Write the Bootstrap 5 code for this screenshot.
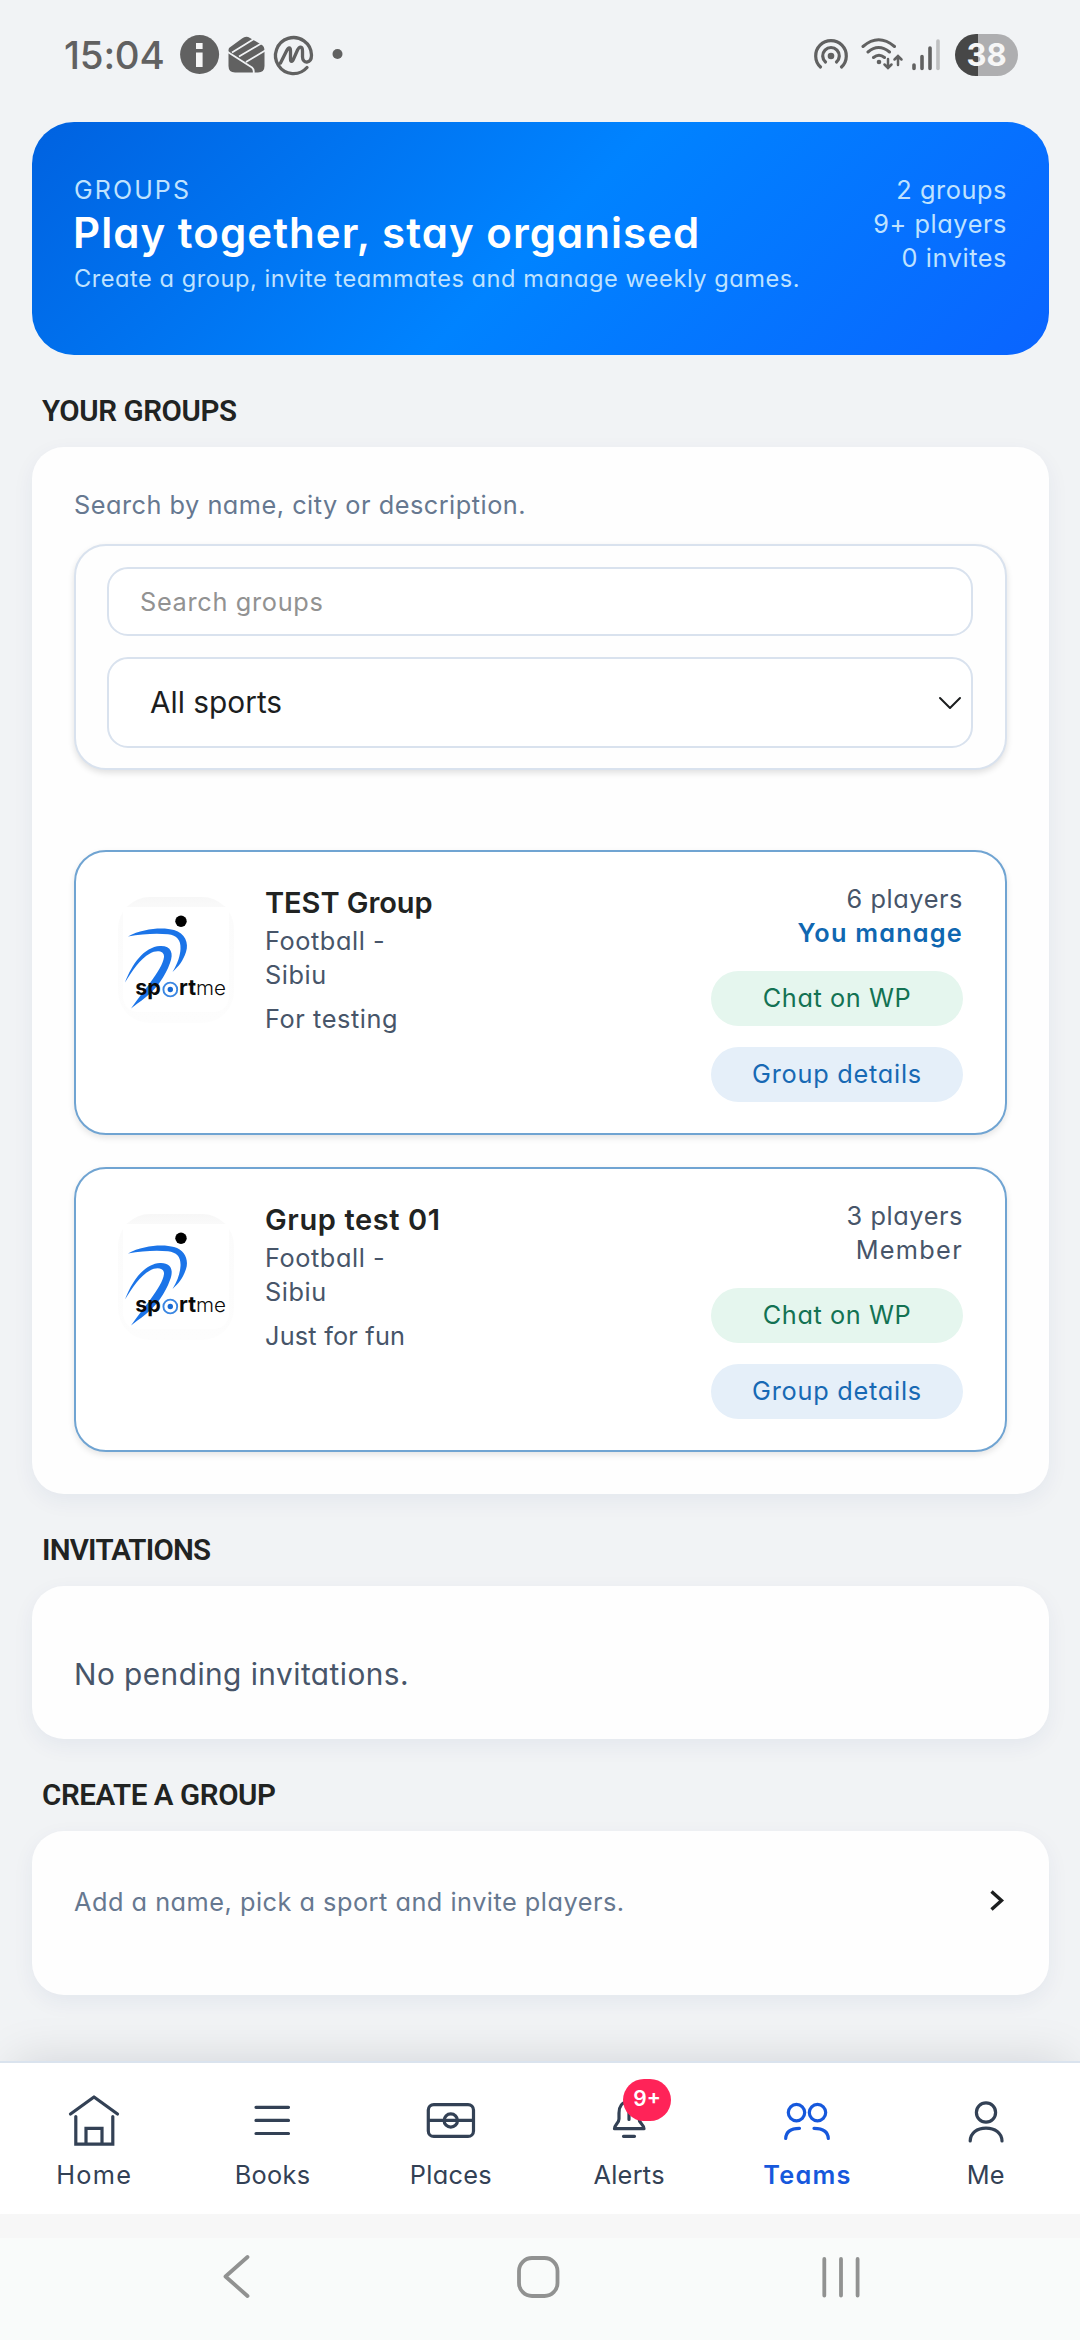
<!DOCTYPE html>
<html lang="en">
<head>
<meta charset="utf-8">
<meta name="viewport" content="width=device-width, initial-scale=1">
<title>Groups</title>
<link href="https://cdn.jsdelivr.net/npm/bootstrap@5.3.0/dist/css/bootstrap.min.css" rel="stylesheet">
<style>
  body{width:1080px;height:2340px;background:#f1f3f5;color:#212322;font-family:Inter,"Open Sans",sans-serif;font-feature-settings:"cv11";font-size:25.3px;line-height:34px;letter-spacing:.58px;overflow:hidden}
  svg{display:block;flex:none}
  .statusbar{height:122px;padding:0 62px 12px 64px;color:#616161}
  .clock{font-size:38.5px;font-weight:500;letter-spacing:-.2px;width:114px}
  .battery{width:63px;height:42px;border-radius:21px;margin-left:13px;background:linear-gradient(90deg,#474747 37%,#aeaeb0 37%);color:#f6f6f6;font-size:31px;font-weight:700;letter-spacing:0}
  .page{padding:0 31px 0 32px}
  .hero{height:233px;border-radius:42px;background:linear-gradient(135deg,#0062e0 0%,#0083ff 50%,#0a64ff 100%);padding:51px 42px 0;color:#bfe2ff}
  .eyebrow{font-size:25px;letter-spacing:2.1px}
  .hero-title{font-size:42px;line-height:46px;font-weight:600;letter-spacing:1.05px;margin:3px 0 6px -1px;color:#fff}
  .hero-sub{font-size:23.6px;letter-spacing:.54px}
  .section-title{font-family:Roboto,sans-serif;font-size:29.5px;line-height:36px;font-weight:600;letter-spacing:-.4px;padding:37.5px 0 18.5px 10px;margin:0}
  .panel{background:#fefefe;border-radius:32px;padding:41px 42px 42px;box-shadow:0 7px 22px rgba(20,50,120,.06)}
  .panel-invites{height:153px;padding-top:68px}
  .panel-create{height:164px;padding-top:54px}
  .empty-note{font-size:29.8px;line-height:40px;letter-spacing:.46px;color:#475569}
  .hint{color:#667890;letter-spacing:.5px}
  .filters{border:2px solid #d9e2ee;border-radius:32px;margin-top:22px;height:226px;padding:21px 32px 0 31px;gap:21px;box-shadow:0 3px 6px rgba(0,0,0,.12);background:#fefefe}
  .field{border:2px solid #d9e2ee;border-radius:21px;background:#fff}
  .field-search{height:69px;padding:0 31px 1px;font-size:25.3px;letter-spacing:.68px;outline:0}
  .field-search::placeholder{color:#929292}
  .field-select{height:91px;padding:0 9px 0 41px}
  .field-select select{appearance:none;border:0;background:none;font:inherit;font-size:29.8px;letter-spacing:0;color:#1c1e1f;padding:0 0 2px;line-height:40px}
  .groups{margin-top:80px;gap:32px}
  .group{height:285px;border:2px solid #70a4d2;border-radius:32px;background:#fff;padding:30px 42px 0;box-shadow:0 3px 6px rgba(0,0,0,.1);color:#475569}
  .logo{margin:15px 31px 0 0}
  .group-name{font-size:29px;line-height:36px;font-weight:600;margin:2.5px 0 3.5px;letter-spacing:-.05px;color:#212322}
  .about{margin-top:10px}
  .side{width:252px}
  .manage{color:#0f67b1;font-weight:600;letter-spacing:1.2px}
  .member{letter-spacing:1.3px}
  .pill{height:55px;border-radius:28px;margin-top:21px;padding-bottom:1px}
  .pill-chat{background:#e5f6ee;color:#137253}
  .pill-info{background:#e5eff9;color:#1769b4;letter-spacing:.75px}
  .tabs{height:153px;border-top:2px solid #dae3ee;background:#fff;padding:27px 5px 0;box-shadow:0 -14px 48px -14px rgba(15,15,20,.13);color:#334155;z-index:2;letter-spacing:.3px}
  .tabs>div{flex:1 1 0}
  .tabs svg{margin-bottom:8px}
  .tab-home{letter-spacing:1.3px}
  .tab-active{color:#1658dc;font-weight:600;letter-spacing:1.3px}
  .bell{width:60px}
  .alert-count{position:absolute;left:24px;top:-11px;width:48px;height:42px;border-radius:21px;background:#ff2358;color:#fff;font-size:21px;font-weight:600;letter-spacing:0;line-height:39px}
  .inset-strip{height:24px;background:#f7f7f7;z-index:3}
  .sysbar{height:102px;background:#f9fbfa;z-index:3}
</style>
</head>
<body class="d-flex flex-column">

<header class="statusbar d-flex align-items-center">
  <span class="clock">15:04</span>
  <svg width="165" height="44" viewBox="178 34 165 44">
    <circle cx="199.600" cy="55.500" r="19.500" fill="#616161"/>
    <path d="M196 44h6.600v6H196zM196 53.500h6.600V68H196z" fill="#f6f6f6"/>
    <path d="M229 49 242 39.500Q246 36.500 250 39L262 46Q264.500 47.500 264.500 52V67Q264.500 73.500 258 73.500H235Q228.500 73.500 228.500 67V51Z" fill="#616161"/>
    <path d="M227 52.500 252 68.500Q254.500 70.500 253.500 75M239 57.500 264.500 42.500M246 63 266 51M232 53.500 255.500 39" fill="none" stroke="#f1f3f5" stroke-width="1.800"/>
    <path d="M307 68.500A18 18 0 1 1 311.500 56C311.500 65 302.500 65 302.500 58V52C302.500 47 299.500 47 297.500 51L293.500 60C292.500 63 290.500 63 290.500 60V52C290.500 48 288.500 48 286.500 52L280.500 64" fill="none" stroke="#616161" stroke-width="3.300" stroke-linecap="round"/>
    <circle cx="338" cy="55" r="5" fill="#616161" transform="translate(-.5 0)"/>
  </svg>
  <svg class="ms-auto" width="130" height="44" viewBox="812 34 130 44" fill="none" stroke="#616161" stroke-width="3.200" stroke-linecap="round">
    <path d="M820.500 68A15.300 15.300 0 1 1 841.500 68M825.500 63A8.300 8.300 0 1 1 836.500 63"/>
    <circle cx="831" cy="57" r="3.300" fill="#616161" stroke="none"/>
    <path d="M863 47.500Q878.500 34 894.500 47.500M868 53Q878.500 44 889.500 53M873.500 58.500Q879 54 884.500 58.500" stroke-width="3"/>
    <circle cx="879" cy="63" r="2.300" fill="#616161" stroke="none"/>
    <path d="M888 60V68.500M884.500 65.500 888 69 891.500 65.500M898 66V57.500M894.500 60.500 898 57 901.500 60.500" stroke-width="2.500"/>
    <path d="M914 66V69.500M922 57.500V69.500M930 49V69.500" stroke-width="3.600"/>
    <path d="M938 42V69.500" stroke="#bfc0c1" stroke-width="3.600"/>
  </svg>
  <span class="battery d-flex align-items-center justify-content-center">38</span>
</header>

<main class="page flex-grow-1">
  <section class="hero d-flex justify-content-between">
    <div>
      <div class="eyebrow">GROUPS</div>
      <h1 class="hero-title">Play together, stay organised</h1>
      <div class="hero-sub">Create a group, invite teammates and manage weekly games.</div>
    </div>
    <div class="text-end">2 groups<br>9+ players<br>0 invites</div>
  </section>

  <h2 class="section-title">YOUR GROUPS</h2>
  <section class="panel">
    <div class="hint">Search by name, city or description.</div>
    <form class="filters d-flex flex-column">
      <input class="field field-search w-100" type="text" placeholder="Search groups">
      <div class="field field-select d-flex align-items-center">
        <select class="flex-grow-1"><option>All sports</option></select>
        <svg width="24" height="14" viewBox="0 0 24 14" fill="none" stroke="#1c1e1f" stroke-width="2" stroke-linecap="round" stroke-linejoin="round"><path d="M2 2 12 12 22 2"/></svg>
      </div>
    </form>

    <div class="groups d-flex flex-column">
      <article class="group d-flex align-items-start">
        <svg class="logo" width="116" height="126" viewBox="0 0 116 126">
          <defs>
            <linearGradient id="tile" x1="0" y1="0" x2="0" y2="1"><stop offset="0" stop-color="#f7f7f7"/><stop offset=".12" stop-color="#fbfbfb"/><stop offset="1" stop-color="#fdfdfd"/></linearGradient>
            <g id="runner">
              <rect width="116" height="126" rx="32" fill="url(#tile)"/>
              <path d="M5 10H111V98Q111 115 94 115H22Q5 115 5 98Z" fill="#fff"/>
              <circle cx="63" cy="24.300" r="5.700" fill="#000"/>
              <path d="M10 39.500C25 31 46 30 56 33C67 36 71 46 68 55C65 64 61 69 54.500 75C60 66 62 59 62.500 52C63 43 59 38.500 50 37.300C38 36 24 37 10 39.500Z" fill="#1b74e8"/>
              <path d="M7 85.500C14 67 26 50 42 49C53 48.500 56 56 52 66C47 80 38 92 28 100C22 105 17 108 13 111.500C19 103 26 94 32 86C40 75 45 67 46 60C46.500 53.500 38 53 32 56.500C22 62 14 74 7 85.500Z" fill="#1b74e8"/>
              <circle cx="52.300" cy="92.500" r="6.900" fill="#fff" stroke="#3b87e2" stroke-width="1.900"/>
              <circle cx="52.300" cy="92.500" r="2.700" fill="#1769d2"/>
              <g fill="#0b0b0b" font-family="Inter, sans-serif" letter-spacing="0">
                <text x="17.300" y="98" font-size="21.500" font-weight="700" textLength="25.500" lengthAdjust="spacingAndGlyphs">sp</text>
                <text x="61" y="98" font-size="21.500" font-weight="700" textLength="17" lengthAdjust="spacingAndGlyphs">rt</text>
                <text x="78" y="98" font-size="19.500" font-weight="300" textLength="30" lengthAdjust="spacingAndGlyphs">me</text>
              </g>
            </g>
          </defs>
          <use href="#runner"/>
        </svg>
        <div>
          <h3 class="group-name">TEST Group</h3>
          <div>Football -<br>Sibiu</div>
          <div class="about">For testing</div>
        </div>
        <div class="side ms-auto text-end">
          <div>6 players</div>
          <div class="manage">You manage</div>
          <div class="pill pill-chat d-flex align-items-center justify-content-center">Chat on WP</div>
          <div class="pill pill-info d-flex align-items-center justify-content-center">Group details</div>
        </div>
      </article>

      <article class="group d-flex align-items-start">
        <svg class="logo" width="116" height="126" viewBox="0 0 116 126"><use href="#runner"/></svg>
        <div>
          <h3 class="group-name" style="letter-spacing:.6px">Grup test 01</h3>
          <div>Football -<br>Sibiu</div>
          <div class="about" style="letter-spacing:.2px">Just for fun</div>
        </div>
        <div class="side ms-auto text-end">
          <div>3 players</div>
          <div class="member">Member</div>
          <div class="pill pill-chat d-flex align-items-center justify-content-center">Chat on WP</div>
          <div class="pill pill-info d-flex align-items-center justify-content-center">Group details</div>
        </div>
      </article>
    </div>
  </section>

  <h2 class="section-title" style="letter-spacing:-.8px">INVITATIONS</h2>
  <section class="panel panel-invites">
    <div class="empty-note">No pending invitations.</div>
  </section>

  <h2 class="section-title">CREATE A GROUP</h2>
  <section class="panel panel-create d-flex justify-content-between">
    <div class="hint">Add a name, pick a sport and invite players.</div>
    <svg width="20" height="30" viewBox="0 0 20 30" fill="none" stroke="#1c1e1f" stroke-width="3.400"><path d="M4.500 6.500 14.500 15.500 4.500 24.500"/></svg>
  </section>
</main>

<nav class="tabs d-flex text-center position-relative">
  <div class="tab-home">
    <svg class="mx-auto" width="60" height="60" fill="none" stroke="#334155" stroke-width="3.200" stroke-linecap="round"><path d="M6.500 24 30 7 53.500 24" stroke-linejoin="round"/><path d="M11.800 26.500V54.200H48.800V26.500M22 54V38.300H38V54"/></svg>
    Home
  </div>
  <div>
    <svg class="mx-auto" width="60" height="60" fill="none" stroke="#334155" stroke-width="3.200" stroke-linecap="round"><path d="M14 17.300H46.500M14 30.400H46.500M14 43.500H46.500"/></svg>
    Books
  </div>
  <div>
    <svg class="mx-auto" width="60" height="60" fill="none" stroke="#334155" stroke-width="3.200"><rect x="7.300" y="14.600" width="45.200" height="31.800" rx="5.500"/><path d="M7.300 30.400H52.500"/><circle cx="29.800" cy="30.500" r="6.700"/></svg>
    Places
  </div>
  <div>
    <div class="bell position-relative mx-auto">
      <svg width="60" height="60" fill="none" stroke="#334155" stroke-width="3.200" stroke-linecap="round" stroke-linejoin="round"><path d="M30 11.500C23 11.500 20 17 20 23V29C20 33 15.500 34.500 15.500 38.700H45C45 34.500 40 33 40 29V23C40 17 37 11.500 30 11.500Z"/><path d="M30 22V29.500M24.500 46.300H35.500"/></svg>
      <span class="alert-count">9+</span>
    </div>
    Alerts
  </div>
  <div class="tab-active">
    <svg class="mx-auto" width="60" height="60" fill="none" stroke="#1658dc" stroke-width="3.200" stroke-linecap="round"><circle cx="19.500" cy="22.600" r="8.200"/><circle cx="40.500" cy="22.600" r="8.200"/><path d="M8.700 48.500C9 41.500 14 38.300 22.500 38.300M37 38.300C45.500 38.300 51 41.500 51.300 48.500"/></svg>
    Teams
  </div>
  <div>
    <svg class="mx-auto" width="60" height="60" fill="none" stroke="#334155" stroke-width="3.200" stroke-linecap="round"><circle cx="30" cy="22.500" r="9.600"/><path d="M14.200 51C14.500 43 21 38.200 30 38.200S45.700 43 46 51"/></svg>
    Me
  </div>
</nav>

<div class="inset-strip position-relative"></div>
<footer class="sysbar position-relative">
  <svg width="1080" height="102" viewBox="0 2238 1080 102" fill="none" stroke="#919291" stroke-width="3.800" stroke-linecap="round" stroke-linejoin="round">
    <path d="M247.500 2257 225.500 2276.500 247.500 2296"/>
    <rect x="519" y="2258" width="38.500" height="38" rx="13"/>
    <path d="M824.300 2259V2295.500M841 2259V2295.500M857.600 2259V2295.500"/>
  </svg>
</footer>

<script src="https://cdn.jsdelivr.net/npm/bootstrap@5.3.0/dist/js/bootstrap.bundle.min.js"></script>
</body>
</html>
